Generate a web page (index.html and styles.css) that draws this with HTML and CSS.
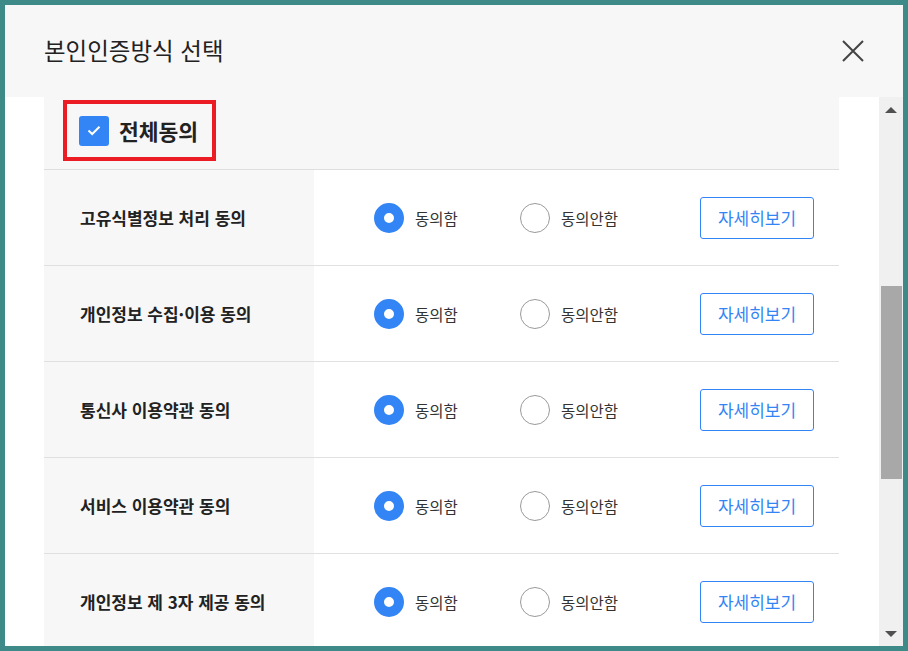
FILE: index.html
```html
<!DOCTYPE html>
<html lang="ko">
<head>
<meta charset="utf-8">
<title>본인인증방식 선택</title>
<link rel="stylesheet" href="styles.css">
</head>
<body>
<div class="modal">
  <header class="modal-header">
    <h1 class="modal-title">본인인증방식 선택</h1>
    <button class="close-btn" aria-label="닫기">
      <svg width="22" height="22" viewBox="0 0 22 22"><path d="M1 1L21 21M21 1L1 21" stroke="#444" stroke-width="2" fill="none"/></svg>
    </button>
  </header>
  <div class="modal-body">
    <div class="content">
      <div class="all-row">
        <div class="all-box">
          <span class="checkbox">
            <svg width="14" height="11" viewBox="0 0 14 11"><path d="M1.5 5.5L5.2 9L12.5 1.8" stroke="#fff" stroke-width="2" fill="none"/></svg>
          </span>
          <span class="all-label">전체동의</span>
        </div>
      </div>

      <div class="row">
        <div class="row-label">고유식별정보 처리 동의</div>
        <div class="row-ctrl">
          <label class="opt opt-yes"><span class="radio on"></span><span class="opt-text">동의함</span></label>
          <label class="opt"><span class="radio"></span><span class="opt-text">동의안함</span></label>
          <button class="detail-btn">자세히보기</button>
        </div>
      </div>

      <div class="row">
        <div class="row-label">개인정보 수집·이용 동의</div>
        <div class="row-ctrl">
          <label class="opt opt-yes"><span class="radio on"></span><span class="opt-text">동의함</span></label>
          <label class="opt"><span class="radio"></span><span class="opt-text">동의안함</span></label>
          <button class="detail-btn">자세히보기</button>
        </div>
      </div>

      <div class="row">
        <div class="row-label">통신사 이용약관 동의</div>
        <div class="row-ctrl">
          <label class="opt opt-yes"><span class="radio on"></span><span class="opt-text">동의함</span></label>
          <label class="opt"><span class="radio"></span><span class="opt-text">동의안함</span></label>
          <button class="detail-btn">자세히보기</button>
        </div>
      </div>

      <div class="row">
        <div class="row-label">서비스 이용약관 동의</div>
        <div class="row-ctrl">
          <label class="opt opt-yes"><span class="radio on"></span><span class="opt-text">동의함</span></label>
          <label class="opt"><span class="radio"></span><span class="opt-text">동의안함</span></label>
          <button class="detail-btn">자세히보기</button>
        </div>
      </div>

      <div class="row">
        <div class="row-label">개인정보 제 3자 제공 동의</div>
        <div class="row-ctrl">
          <label class="opt opt-yes"><span class="radio on"></span><span class="opt-text">동의함</span></label>
          <label class="opt"><span class="radio"></span><span class="opt-text">동의안함</span></label>
          <button class="detail-btn">자세히보기</button>
        </div>
      </div>
    </div>

    <div class="scrollbar">
      <div class="arrow-up"></div>
      <div class="thumb"></div>
      <div class="track-fill"></div>
      <div class="arrow-down"></div>
    </div>
  </div>
</div>
</body>
</html>
```

FILE: styles.css
```css
* { box-sizing: border-box; }

html, body {
  margin: 0;
  padding: 0;
  width: 908px;
  height: 651px;
  overflow: hidden;
}

body {
  background: #3d8a89;
  font-family: "Noto Sans CJK KR", "Noto Sans", sans-serif;
  color: #222;
}

.modal {
  margin: 5px;
  width: 898px;
  height: 641px;
  background: #fff;
  display: flex;
  flex-direction: column;
  overflow: hidden;
}

.modal-header {
  height: 92px;
  flex: none;
  background: #f7f7f7;
  display: flex;
  align-items: center;
  justify-content: space-between;
  padding: 0 39px 0 39px;
}

.modal-title {
  margin: 0;
  font-size: 23.5px;
  font-weight: 400;
  color: #222;
  line-height: 1;
}

.close-btn {
  border: 0;
  background: transparent;
  padding: 0;
  width: 22px;
  height: 22px;
  display: flex;
  cursor: pointer;
}

.modal-body {
  flex: 1;
  display: flex;
  min-height: 0;
  padding-left: 39px;
}

.content {
  width: 795px;
  flex: none;
  overflow: hidden;
}

.all-row {
  height: 73px;
  background: #f7f7f7;
  border-bottom: 1px solid #dedede;
  padding: 3px 0 0 19px;
}

.all-box {
  display: inline-flex;
  align-items: center;
  gap: 10px;
  border: 4px solid #ec1c24;
  padding: 11px 14px 11px 12px;
  height: 61px;
}

.checkbox {
  width: 30px;
  height: 30px;
  border-radius: 3px;
  background: #3385f6;
  display: flex;
  align-items: center;
  justify-content: center;
}

.all-label {
  font-size: 21.5px;
  font-weight: 700;
  color: #222;
  line-height: 1;
}

.row {
  height: 96px;
  display: flex;
  border-bottom: 1px solid #e0e0e0;
}

.row-label {
  width: 270px;
  flex: none;
  background: #f7f7f7;
  display: flex;
  align-items: center;
  padding-left: 36px;
  font-size: 17px;
  font-weight: 700;
  color: #222;
}

.row-ctrl {
  flex: 1;
  display: flex;
  align-items: center;
  padding-left: 60px;
  padding-right: 25px;
}

.opt {
  display: flex;
  align-items: center;
  gap: 11px;
}

.opt-yes {
  width: 146px;
}

.radio {
  width: 30px;
  height: 30px;
  border-radius: 50%;
  border: 1px solid #9a9a9a;
  background: #fff;
  flex: none;
}

.radio.on {
  border: 10px solid #3385f6;
}

.opt-text {
  font-size: 15.5px;
  color: #333;
}

.detail-btn {
  margin-left: auto;
  width: 114px;
  height: 42px;
  border: 1px solid #3385f6;
  border-radius: 3px;
  background: #fff;
  color: #3385f6;
  font-family: "Noto Sans CJK KR", "Noto Sans", sans-serif;
  font-size: 17px;
  padding: 0;
  cursor: pointer;
}

.scrollbar {
  margin-left: 40px;
  width: 24px;
  flex: none;
  background: #f0f0f0;
  display: flex;
  flex-direction: column;
  align-items: center;
}

.arrow-up {
  margin-top: 10px;
  width: 0;
  height: 0;
  border-left: 6px solid transparent;
  border-right: 6px solid transparent;
  border-bottom: 6px solid #505050;
}

.thumb {
  margin-top: 173px;
  width: 21px;
  height: 193px;
  background: #a8a8a8;
  margin-left: 1px;
}

.track-fill {
  flex: 1;
}

.arrow-down {
  margin-bottom: 9px;
  width: 0;
  height: 0;
  border-left: 6px solid transparent;
  border-right: 6px solid transparent;
  border-top: 6px solid #505050;
}
```
